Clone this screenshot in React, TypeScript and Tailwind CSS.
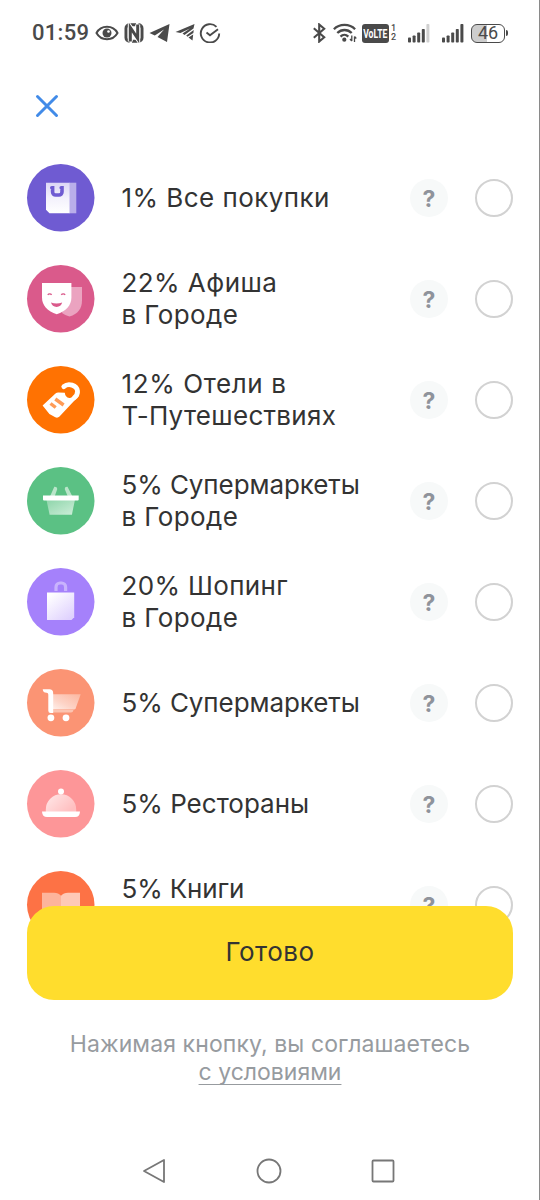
import type { ReactNode } from "react"

type Category = {
  id: string
  lines: { text: string; tracking: string }[]
  icon: ReactNode
}

const BagIcon = () => (
  <svg viewBox="0 0 67.5 67.5" className="h-full w-full overflow-visible">
    <circle cx="33.75" cy="33.75" r="33.75" fill="#6f5bd2" />
    <path d="M42 18.7h7.3v30.6H42z" fill="#b9aeea" />
    <path d="M19 18.7h23.5v30.6H22.5L19 45.8z" fill="url(#bagFill)" />
    <path d="M24.8 23.8h.8v4.200a3 3 0 0 0 3 3h3.400a3 3 0 0 0 3-3v-4.200h-.8" fill="none" stroke="#6f5bd2" strokeWidth="3.6" strokeLinecap="round" />
    <defs>
      <linearGradient id="bagFill" x1="0" y1="0" x2="0" y2="1">
        <stop offset="0" stopColor="#dcd6f6" />
        <stop offset="0.5" stopColor="#f3f1fc" />
        <stop offset="1" stopColor="#fff" />
      </linearGradient>
    </defs>
  </svg>
)

const MaskIcon = () => (
  <svg viewBox="0 0 67.5 67.5" className="h-full w-full overflow-visible">
    <circle cx="33.75" cy="33.75" r="33.75" fill="#da5a8b" />
    <path d="M43 22h12v13.5c0 8-4 13.5-12.5 16-3-.8-5.500-2-7.500-3.500z" fill="#eba3c0" />
    <path d="M15 18h29.4v14.5c0 8-5.500 14-14.700 16.700C20.500 46.500 15 40.500 15 32.500z" fill="#fff" />
    <path d="M20.800 29.800c.8-1.300 3-1.300 3.800 0M34.300 29.800c.8-1.300 3-1.300 3.800 0" fill="none" stroke="#da5a8b" strokeWidth="1.4" />
    <path d="M24 37.600c3.500 1.200 7.500 1.200 11.200 0-.6 2.800-2.800 4.300-5.600 4.300s-5-1.500-5.600-4.300z" fill="#da5a8b" />
  </svg>
)

const HotelIcon = () => (
  <svg viewBox="0 0 67.5 67.5" className="h-full w-full overflow-visible">
    <circle cx="33.75" cy="33.75" r="33.75" fill="#ff7202" />
    <path d="M36.800 20.600c4.600-4 13-1.500 13.700 4.400.4 3-1.100 5-3.500 7" fill="none" stroke="#fff" strokeWidth="4.8" strokeLinecap="round" />
    <path d="M15.600 39.600 28.500 27.500q1.300-1.200 3-1.100l6.300.4q.4 4.600 4.500 5.200 3.400.3 5.800-2.700l3.600.8L32.500 50.600q-2 1.700-4.200.6l-5-2.600q-1-.5-1.700-1.500z" fill="#fff" />
    <path d="m28.300 33 8.300 6M23.500 37.500l5.200 4" stroke="#ff9b57" strokeWidth="3.4" />
  </svg>
)

const BasketIcon = () => (
  <svg viewBox="0 0 67.5 67.5" className="h-full w-full overflow-visible">
    <circle cx="33.75" cy="33.75" r="33.75" fill="#5bc184" />
    <path d="m23.200 29 4.100-9.200q2.800-.3 3 2.200L27.800 29zM45.200 29l-4.700-9.200q-2.800-.3-2.800 2.200L40.600 29z" fill="#b9e5c9" />
    <path d="M19.500 33h28.400l-3 14.700H22.600z" fill="url(#basketFill)" />
    <path d="M16 28.600h35.700v4q0 1-1 1H17q-1 0-1-1z" fill="#fff" />
    <defs>
      <linearGradient id="basketFill" x1="0" y1="0" x2="1" y2="1">
        <stop offset="0" stopColor="#8ed5aa" />
        <stop offset="1" stopColor="#cdeed9" />
      </linearGradient>
    </defs>
  </svg>
)

const ShoppingIcon = () => (
  <svg viewBox="0 0 67.5 67.5" className="h-full w-full overflow-visible">
    <circle cx="33.75" cy="33.75" r="33.75" fill="#a581fb" />
    <path d="M29 23v-4a4 4 0 0 1 4-4h1.600a4 4 0 0 1 4 4v4" fill="none" stroke="#c9b3fd" strokeWidth="3.2" />
    <path d="M20 24.500h27.200v24.700L44.500 52H20z" fill="url(#shoppingFill)" />
    <defs>
      <linearGradient id="shoppingFill" x1="0" y1="0" x2="0.8" y2="1">
        <stop offset="0.1" stopColor="#fff" />
        <stop offset="1" stopColor="#dfd1fe" />
      </linearGradient>
    </defs>
  </svg>
)

const CartIcon = () => (
  <svg viewBox="0 0 67.5 67.5" className="h-full w-full overflow-visible">
    <circle cx="33.75" cy="33.75" r="33.75" fill="#fb9474" />
    <path d="M25.500 25.200h28.200l-5 14q-.5 1.300-2 1.300H25.500z" fill="url(#cartFill)" />
    <path d="M26 41h20.500q-.5 2.600-2.500 2.600H26z" fill="#fcc4b1" />
    <path d="M15.700 20.300h6.600q3.900 0 3.900 3.900V44h-2.600q-2.300 0-2.300-2.300V25.500q0-1.700-1.700-1.700-3.600 0-3.900-3.500z" fill="#fff" />
    <circle cx="23.9" cy="48.8" r="3.4" fill="#fff" />
    <circle cx="39" cy="48.8" r="3.4" fill="#fff" />
    <defs>
      <linearGradient id="cartFill" x1="1" y1="0" x2="0" y2="1">
        <stop offset="0" stopColor="#fcb7a0" />
        <stop offset="0.6" stopColor="#fdd3c6" />
        <stop offset="1" stopColor="#fef0eb" />
      </linearGradient>
    </defs>
  </svg>
)

const RestaurantIcon = () => (
  <svg viewBox="0 0 67.5 67.5" className="h-full w-full overflow-visible">
    <circle cx="33.75" cy="33.75" r="33.75" fill="#fd9698" />
    <path d="M18.800 42v-2.500a15.200 15.200 0 0 1 30.400 0V42z" fill="url(#domeFill)" />
    <circle cx="34" cy="21.500" r="3" fill="#fff" />
    <path d="M15 41.400h38q-.3 5.500-4.800 5.500H20q-4.700 0-5-5.500z" fill="#fff" />
    <defs>
      <linearGradient id="domeFill" x1="0" y1="0" x2="1" y2="0.6">
        <stop offset="0" stopColor="#ffe9e9" />
        <stop offset="1" stopColor="#ffbfc0" />
      </linearGradient>
    </defs>
  </svg>
)

const BookIcon = () => (
  <svg viewBox="0 0 67.5 67.5" className="h-full w-full overflow-visible">
    <circle cx="33.75" cy="33.75" r="33.75" fill="#fd7245" />
    <path d="M34 24.700q-2.500-3-7-3H15V46h19z" fill="#fdb49b" />
    <path d="M34 24.700q2.500-3 7-3h12V46H34z" fill="#fec9b6" />
  </svg>
)

const categories: Category[] = [
  { id: "all", icon: <BagIcon />, lines: [{ text: "1% Все покупки", tracking: "tracking-[0.45px]" }] },
  {
    id: "afisha",
    icon: <MaskIcon />,
    lines: [
      { text: "22% Афиша", tracking: "tracking-[0.45px]" },
      { text: "в Городе", tracking: "tracking-[0.4px]" },
    ],
  },
  {
    id: "hotels",
    icon: <HotelIcon />,
    lines: [
      { text: "12% Отели в", tracking: "tracking-[0.6px]" },
      { text: "Т-Путешествиях", tracking: "tracking-[0.28px]" },
    ],
  },
  {
    id: "city-markets",
    icon: <BasketIcon />,
    lines: [
      { text: "5% Супермаркеты", tracking: "tracking-[-0.08px]" },
      { text: "в Городе", tracking: "tracking-[0.4px]" },
    ],
  },
  {
    id: "shopping",
    icon: <ShoppingIcon />,
    lines: [
      { text: "20% Шопинг", tracking: "tracking-[0.35px]" },
      { text: "в Городе", tracking: "tracking-[0.4px]" },
    ],
  },
  { id: "markets", icon: <CartIcon />, lines: [{ text: "5% Супермаркеты", tracking: "tracking-[-0.08px]" }] },
  { id: "restaurants", icon: <RestaurantIcon />, lines: [{ text: "5% Рестораны", tracking: "tracking-[0px]" }] },
  {
    id: "books",
    icon: <BookIcon />,
    lines: [
      { text: "5% Книги", tracking: "tracking-[-0.15px]" },
      { text: "\u00a0", tracking: "tracking-[0px]" },
    ],
  },
]

function StatusBar() {
  return (
    <div className="flex h-[66px] shrink-0 items-center justify-between pr-[31px] pl-8 text-[#4a4a4a]">
      <div className="flex items-center">
        <span className="w-[63px] font-[Roboto] text-[22px] leading-none font-medium tracking-[0.3px]">01:59</span>
        {/* Eye comfort */}
        <svg width="24" height="20" viewBox="0 0 24 20" fill="none" stroke="currentColor" strokeWidth="2">
          <path d="M1.500 10C6 1.800 18 1.800 22.500 10 18 18.200 6 18.200 1.500 10z" />
          <circle cx="12" cy="10" r="4.500" fill="currentColor" stroke="none" />
          <circle cx="13.500" cy="8.500" r="1.300" fill="#fff" stroke="none" />
        </svg>
        {/* NFC */}
        <svg className="ml-[5px]" width="20" height="20" viewBox="0 0 20 20" fill="none">
          <path d="M12 1.800H5.500a3.500 3.500 0 0 0-3.500 3.500v9.400a3.500 3.500 0 0 0 3.500 3.500M8 18.200h6.500a3.500 3.500 0 0 0 3.500-3.500V5.300a3.500 3.500 0 0 0-3.500-3.500" stroke="currentColor" strokeWidth="3" />
          <path d="M6.300 18.500V4.500L13.700 15.500V1.500" stroke="#fff" strokeWidth="5" />
          <path d="M6.300 18.500V4.500L13.700 15.500V1.500" stroke="currentColor" strokeWidth="3" />
        </svg>
        {/* Telegram */}
        <svg className="ml-[5px]" width="21" height="20" viewBox="0 0 21 20" fill="currentColor">
          <path d="M20.500 1 .500 10l5.300 2.400L15 6.500 8.500 14l9.500 5z" />
        </svg>
        <svg className="ml-[5px]" width="20" height="20" viewBox="0 0 20 20" fill="currentColor">
          <path d="M19.500 1 .500 9l5 .9L15 5.500 7.500 10.500l2 1.400 9-6.400zM18.700 7l-7.500 5.500 1.300 1.200 5.900-3.600zM18.200 11.500l-4.700 3 4 3z" />
        </svg>
        <svg className="ml-[4px]" width="22" height="20" viewBox="0 0 22 20" fill="none" stroke="currentColor" strokeWidth="1.900">
          <path d="M17.500 3.800A9.200 9.200 0 1 0 20.200 10.500" />
          <path d="m7.500 9.500 3.500 2.800 8-6" />
        </svg>
      </div>
      <div className="flex items-center">
        {/* Bluetooth */}
        <svg width="13" height="20" viewBox="0 0 13 20" fill="none" stroke="currentColor" strokeWidth="2.100">
          <path d="m.800 5.300 10.400 8.900-5 4.300V1.500l5 4.300L.800 14.700" />
        </svg>
        {/* Wi-Fi */}
        <svg className="ml-[7px]" width="24" height="20" viewBox="0 0 24 20" fill="none" stroke="currentColor" strokeWidth="2.300">
          <path d="M.900 6.200C6.500.500 16.500.500 22.100 6.200M4.300 10c4-4 10.400-4 14.400 0M7.500 13.600c2.300-2.300 5.500-2.300 7.800 0" />
          <circle cx="11.300" cy="16.700" r="2.100" fill="currentColor" stroke="none" />
          <path d="M18.800 12.500v5.500M17 16l1.800 2M21.500 19v-5.500M23.300 15.500l-1.800-2" strokeWidth="1.300" />
        </svg>
        {/* VoLTE */}
        <div className="ml-[5px] flex h-[19px] w-[27px] items-center justify-center rounded-[3px] bg-[#4a4a4a]">
          <span className="scale-x-[0.66] font-[Roboto] text-[13px] leading-none font-bold text-white">VoLTE</span>
        </div>
        <div className="ml-[2px] flex w-[6px] flex-col font-[Roboto] text-[9px] leading-[9px] font-medium">
          <span>1</span>
          <span>2</span>
        </div>
        <svg className="ml-[11px]" width="22" height="20" viewBox="0 0 22 20" fill="currentColor">
          <rect x="0" y="14.5" width="3" height="5" rx="0.8" />
          <rect x="4.6" y="12.5" width="3" height="7" rx="0.8" />
          <rect x="9.2" y="9.5" width="3" height="10" rx="0.8" />
          <rect x="13.8" y="6" width="3" height="13.5" rx="0.8" />
          <rect x="18.4" y="1" width="3" height="18.5" rx="0.8" fill="#d0d0d0" />
        </svg>
        <svg className="ml-[12px]" width="22" height="20" viewBox="0 0 22 20" fill="currentColor">
          <rect x="0" y="14.5" width="3" height="5" rx="0.8" />
          <rect x="4.6" y="12.5" width="3" height="7" rx="0.8" />
          <rect x="9.2" y="9.5" width="3" height="10" rx="0.8" />
          <rect x="13.8" y="6" width="3" height="13.5" rx="0.8" />
          <rect x="18.4" y="1" width="3" height="18.5" rx="0.8" />
        </svg>
        {/* Battery */}
        <div className="ml-[7px] flex h-[19px] w-[34px] items-center justify-center rounded-[6px] border-[1.5px] border-[#4a4a4a] bg-linear-to-r from-[#cdcdcd] from-46% to-white to-46%">
          <span className="font-[Roboto] text-[18px] leading-none">46</span>
        </div>
        <div className="ml-[1px] h-[6px] w-[2px] rounded-r-sm bg-[#4a4a4a]" />
      </div>
    </div>
  )
}

function CategoryRow({ category }: { category: Category }) {
  return (
    <div className="flex h-[101px] shrink-0 items-center">
      <div className="h-[67.5px] w-[67.5px] shrink-0">{category.icon}</div>
      <div className="ml-[27.5px] flex-1 text-[26px] leading-[31.5px] whitespace-nowrap text-[#333]">
        {category.lines.map((line, i) => (
          <div key={i}>
            <span className={line.tracking}>{line.text}</span>
          </div>
        ))}
      </div>
      <button className="flex h-[38px] w-[38px] items-center justify-center rounded-full bg-[#f7f9f9] pt-[2px] text-[23px] font-bold text-[#8f939b]">
        ?
      </button>
      <button className="ml-[27px] h-[38px] w-[38px] rounded-full border-2 border-[#d2d2d2]" />
    </div>
  )
}

export default function App() {
  return (
    <div className="flex h-[1200px] w-[540px] flex-col overflow-hidden border-r border-[#8a8a8a] bg-white font-[Inter,sans-serif]">
      <StatusBar />

      <div className="flex h-[81.4px] shrink-0 items-start pt-[27.5px] pl-[35px]">
        <svg width="24" height="24" viewBox="0 0 24 24" stroke="#428be8" strokeWidth="3" strokeLinecap="round">
          <path d="m2.500 2.500 19 19M21.500 2.500l-19 19" />
        </svg>
      </div>

      <div className="flex h-[800.6px] shrink-0 flex-col overflow-hidden pr-[26px] pl-[26.5px]">
        {categories.map((category) => (
          <CategoryRow key={category.id} category={category} />
        ))}
      </div>

      {/* Footer overlaps the end of the list */}
      <div className="relative -mt-[42px] px-[26.5px]">
        <button className="h-[94px] w-full rounded-[27px] bg-[#ffdd2d] pb-[2px] pl-[1px] text-[26px] text-[#333]">
          <span className="tracking-[0.5px]">Готово</span>
        </button>
        <p className="mt-[30px] pl-[1px] text-center text-[23px] leading-[28.5px] whitespace-nowrap text-[#979b9f]">
          <span className="tracking-[0.1px]">Нажимая кнопку, вы соглашаетесь</span>
          <br />
          <span className="underline decoration-1 underline-offset-[4px] [text-decoration-skip-ink:none]">с условиями</span>
        </p>
      </div>

      {/* System navigation */}
      <div className="mt-auto flex h-[58px] items-center justify-center gap-[88px] pr-[1px] text-[#777]">
        <svg width="26" height="26" viewBox="0 0 26 26" fill="none" stroke="currentColor" strokeWidth="1.8" strokeLinejoin="round">
          <path d="M22 2v22L2 13z" />
        </svg>
        <svg width="26" height="26" viewBox="0 0 26 26" fill="none" stroke="currentColor" strokeWidth="1.8">
          <circle cx="13" cy="13" r="11.5" />
        </svg>
        <svg width="26" height="26" viewBox="0 0 26 26" fill="none" stroke="currentColor" strokeWidth="1.8">
          <rect x="2.5" y="2.5" width="21" height="21" rx="1" />
        </svg>
      </div>
    </div>
  )
}
